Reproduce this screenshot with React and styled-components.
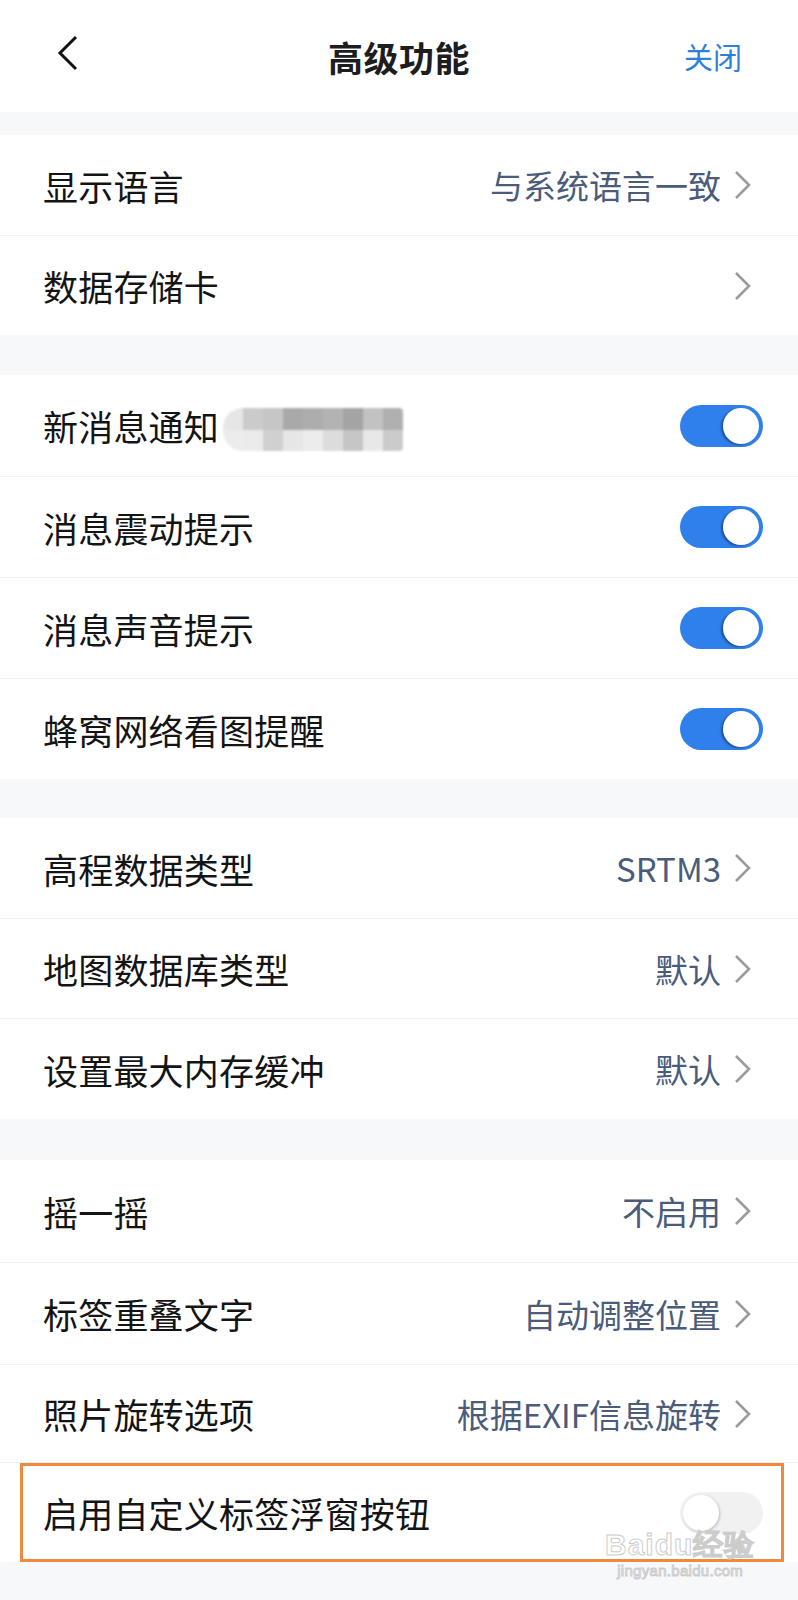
import styled, { createGlobalStyle, css } from 'styled-components';

const GlobalStyle = createGlobalStyle`
  html, body {
    margin: 0;
    padding: 0;
    background: #f7f8fa;
  }
  body {
    font-family: "Noto Sans CJK SC", "Noto Sans", sans-serif;
  }
`;

const Page = styled.div`
  width: 798px;
  min-height: 1600px;
  background: #f7f8fa;
  position: relative;
  overflow: hidden;
`;

const Header = styled.div`
  height: 112px;
  background: #fff;
  display: grid;
  grid-template-columns: 1fr auto 1fr;
  align-items: center;
  padding: 0 56px 0 56px;
  box-sizing: border-box;
`;

const BackButton = styled.div`
  display: flex;
  align-items: center;
  margin-top: -6px;
`;

const Title = styled.div`
  font-size: 35px;
  font-weight: 700;
  color: #1d1d1f;
  letter-spacing: 0.5px;
`;

const CloseLink = styled.div`
  justify-self: end;
  font-size: 29px;
  color: #2f80d9;
`;

const Group = styled.div`
  background: #fff;
  margin-top: ${({gap}) => `${gap}px`};
`;

const Row = styled.div`
  height: ${({h}) => `${h || 100}px`};
  display: flex;
  align-items: center;
  justify-content: space-between;
  padding: 0 35px 0 43px;
  box-sizing: border-box;
  position: relative;
  & + & {
    border-top: 1px solid #f1f2f4;
  }

  ${({highlight}) => highlight && css`
    &:after {
      content: "";
      position: absolute;
      left: 20px;
      right: 14px;
      top: 0;
      bottom: 0;
      border: 3px solid #ee8a3d;
    }
  `}
`;

const Label = styled.div`
  font-size: 35px;
  color: #141414;
  display: flex;
  align-items: center;
  letter-spacing: 0.2px;
`;

const Right = styled.div`
  display: flex;
  align-items: center;
  gap: 12px;
  margin-right: 10px;
`;

const Value = styled.span`
  font-size: 33px;
  color: #4b5b7a;
`;

const Mosaic = styled.span`
  display: grid;
  grid-template-columns: repeat(9, 20px);
  grid-template-rows: 22px 21px;
  margin-left: 4px;
  margin-top: 8px;
  filter: blur(1.2px);
  border-radius: 20px 4px 4px 20px;
  overflow: hidden;
`;

const Cell = styled.span`
  background: ${({shade}) => shade};
`;

const Toggle = styled.div`
  width: 83px;
  height: 42px;
  border-radius: 21px;
  position: relative;
  background: ${({on}) => (on ? '#2f80ea' : '#f1f1f2')};
`;

const Thumb = styled.div`
  position: absolute;
  top: 3px;
  width: 36px;
  height: 36px;
  border-radius: 50%;
  background: #fff;
  ${({on}) => on ? css`
    right: 4px;
    box-shadow: -2px 1px 2px rgba(20, 50, 110, 0.6);
  ` : css`
    left: 3px;
    box-shadow: 1px 1px 3px rgba(0, 0, 0, 0.22);
  `}
`;

const Watermark = styled.div`
  position: absolute;
  left: 605px;
  top: 1528px;
  display: flex;
  flex-direction: column;
  align-items: center;
  color: rgba(255, 255, 255, 0.85);
  -webkit-text-stroke: 1px rgba(190, 190, 190, 0.8);
  font-family: "Liberation Sans", Arial, sans-serif;
  pointer-events: none;
`;

const MarkBig = styled.div`
  font-size: 30px;
  font-weight: 700;
  letter-spacing: 1px;
  line-height: 34px;
`;

const MarkSmall = styled.div`
  font-size: 15px;
  line-height: 18px;
  letter-spacing: 0.3px;
`;

const Chevron = () => (
  <svg width="20" height="30" viewBox="0 0 20 30">
    <path d="M3 2 L16 15 L3 28" fill="none" stroke="#9b9b9b" strokeWidth="2.6" />
  </svg>
);

const mosaicShades = [
  '#e6e6e6', '#cbcbcb', '#c6c6c6', '#a9a9a9', '#adadad', '#b3b3b3', '#a4a4a4', '#c2c2c2', '#b0b0b0',
  '#ececec', '#ebebeb', '#d0d0d0', '#e6e6e6', '#ececec', '#dcdcdc', '#c6c6c6', '#e8e8e8', '#cbcbcb',
];

const NavRow = ({label, value, h}) => (
  <Row h={h}>
    <Label>{label}</Label>
    <Right>
      {value && <Value>{value}</Value>}
      <Chevron />
    </Right>
  </Row>
);

const SwitchRow = ({label, on, h, highlight, children}) => (
  <Row h={h} highlight={highlight}>
    <Label>{label}{children}</Label>
    <Toggle on={on}>
      <Thumb on={on} />
    </Toggle>
  </Row>
);

const App = () => (
  <Page>
    <GlobalStyle />
    <Header>
      <BackButton>
        <svg width="24" height="36" viewBox="0 0 24 36">
          <path d="M20 2 L4 18 L20 34" fill="none" stroke="#111" strokeWidth="3" />
        </svg>
      </BackButton>
      <Title>高级功能</Title>
      <CloseLink>关闭</CloseLink>
    </Header>

    <Group gap={23}>
      <NavRow label="显示语言" value="与系统语言一致" />
      <NavRow label="数据存储卡" />
    </Group>

    <Group gap={40}>
      <SwitchRow label="新消息通知" on h={101}>
        <Mosaic>
          {mosaicShades.map((s, i) => <Cell key={i} shade={s} />)}
        </Mosaic>
      </SwitchRow>
      <SwitchRow label="消息震动提示" on h={101} />
      <SwitchRow label="消息声音提示" on h={101} />
      <SwitchRow label="蜂窝网络看图提醒" on h={101} />
    </Group>

    <Group gap={39}>
      <NavRow label="高程数据类型" value="SRTM3" />
      <NavRow label="地图数据库类型" value="默认" />
      <NavRow label="设置最大内存缓冲" value="默认" h={101} />
    </Group>

    <Group gap={41}>
      <NavRow label="摇一摇" value="不启用" h={102} />
      <NavRow label="标签重叠文字" value="自动调整位置" h={102} />
      <NavRow label="照片旋转选项" value="根据EXIF信息旋转" h={98} />
      <SwitchRow label="启用自定义标签浮窗按钮" h={100} highlight />
    </Group>

    <Watermark>
      <MarkBig>Baidu经验</MarkBig>
      <MarkSmall>jingyan.baidu.com</MarkSmall>
    </Watermark>
  </Page>
);

export default App;
